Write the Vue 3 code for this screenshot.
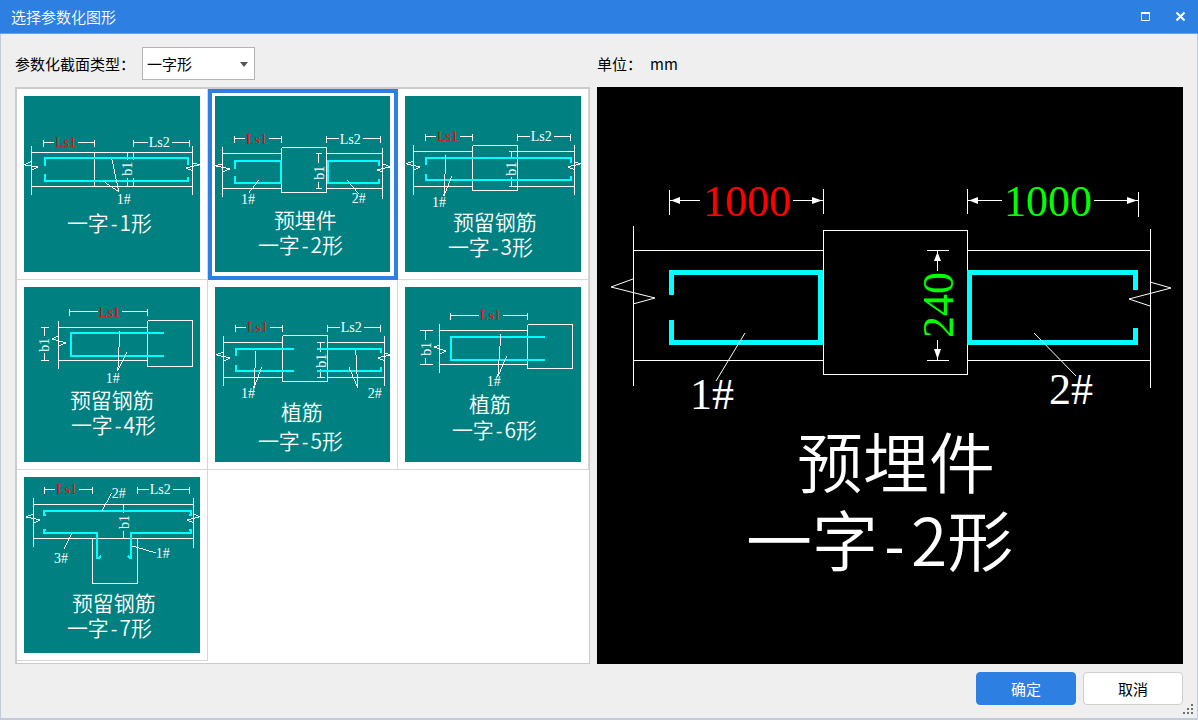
<script setup>
import { ref } from 'vue'

const sectionType = ref('line')
const selected = ref(2)

// Each dimension: start, end, baseline line y, tick range, text x, text baseline
const figures = [
  {
    id: 1,
    dims: [
      { a: 20, b: 71, y: 47, t: 'Ls1', x: 31, base: 51 },
      { a: 110, b: 166, y: 47, t: 'Ls2', x: 125, base: 51 }
    ],
    lines: 'M8 50V99M169 50V99M8 57H169M8 91H169M71 57V91M110 57V64M110 82V91M104 57V64M104 82V91M101 57H107M101 91H107',
    breaks: 'M8 65L0 69L14 71L8 74M169 67L176 69L162 72L169 75M88 63L95 96L79 85',
    bars: 'M21 70V62H164V69M21 78V85H164V81',
    b1: [108, 80],
    marks: [{ t: '1#', x: 93, y: 108 }],
    title: null,
    name: [43, 135]
  },
  {
    id: 2,
    dims: [
      { a: 20, b: 67, y: 43, t: 'Ls1', x: 31, base: 48 },
      { a: 112, b: 166, y: 43, t: 'Ls2', x: 125, base: 48 }
    ],
    lines: 'M8 51V101M168 52V103M8 58H67M8 93H67M112 58H168M112 93H168M67 52H112V97H67ZM104 58V67M104 86V93M101 58H107M101 93H107',
    breaks: 'M8 68L0 70L15 73L8 76M168 68L176 71L162 74L168 76M44 84L34 97M132 84L144 98',
    bars: 'M20 73V65H66V87H20V80M164 70V65H113V87H164V83',
    b1: [109, 84],
    marks: [{ t: '1#', x: 26, y: 108 }, { t: '2#', x: 137, y: 107 }],
    title: { t: '预埋件', x: 59, y: 132 },
    name: [43, 157]
  },
  {
    id: 3,
    dims: [
      { a: 21, b: 68, y: 41, t: 'Ls1', x: 32, base: 45 },
      { a: 113, b: 166, y: 41, t: 'Ls2', x: 126, base: 45 }
    ],
    lines: 'M9 49V99M170 49V99M9 56H68M9 91H68M113 56H170M113 91H170M68 50H113V95H68ZM107 56V63M107 81V91M104 56H113M104 91H113',
    breaks: 'M9 65L1 68L15 71L9 74M170 66L176 68L163 71L170 74M41 59L39 100L47 80',
    bars: 'M21 69V62H166V67M21 78V84H166V80',
    b1: [111, 80],
    marks: [{ t: '1#', x: 27, y: 111 }],
    title: { t: '预留钢筋', x: 48, y: 134 },
    name: [43, 159]
  },
  {
    id: 4,
    dims: [{ a: 46, b: 124, y: 25, t: 'Ls1', x: 75, base: 30 }],
    lines: 'M35 34V82M35 41H124M35 74H124M124 34H169V80H124ZM21 41V49M21 66V74M17 41H25M17 74H25',
    breaks: 'M35 49L28 52L42 56L35 59M96 44L94 84L103 65',
    bars: 'M140 46H47V69H140',
    b1: [25, 65],
    marks: [{ t: '1#', x: 82, y: 96 }],
    title: { t: '预留钢筋', x: 46, y: 121 },
    name: [47, 146]
  },
  {
    id: 5,
    dims: [
      { a: 21, b: 68, y: 41, t: 'Ls1', x: 32, base: 45 },
      { a: 113, b: 166, y: 41, t: 'Ls2', x: 126, base: 45 }
    ],
    lines: 'M9 49V99M170 49V99M9 56H68M9 91H68M113 56H170M113 91H170M68 49H113V95H68ZM106 56V65M106 82V91M102 56H110M102 91H110',
    breaks: 'M9 65L1 68L15 71L9 74M170 66L176 68L163 71L170 74M41 64L39 101L47 80M141 63L143 101L134 80',
    bars: 'M79 62H21V69M21 78V84H79M102 62H166V66M102 84H166V80',
    b1: [111, 81],
    marks: [{ t: '1#', x: 26, y: 111 }, { t: '2#', x: 153, y: 111 }],
    title: { t: '植筋', x: 66, y: 133 },
    name: [43, 162]
  },
  {
    id: 6,
    dims: [{ a: 46, b: 123, y: 29, t: 'Ls1', x: 75, base: 33 }],
    lines: 'M35 37V86M35 44H123M35 78H123M123 38H168V82H123ZM21 44V53M21 71V78M15 44H28M15 78H28',
    breaks: 'M35 58L29 60L41 64L35 67M96 47L93 90L102 69',
    bars: 'M140 50H46V73H140',
    b1: [26, 69],
    marks: [{ t: '1#', x: 82, y: 99 }],
    title: { t: '植筋', x: 64, y: 125 },
    name: [47, 151]
  },
  {
    id: 7,
    dims: [
      { a: 21, b: 69, y: 13, t: 'Ls1', x: 32, base: 17 },
      { a: 114, b: 166, y: 13, t: 'Ls2', x: 126, base: 17 }
    ],
    lines: 'M10 21V70M170 21V71M10 28H170M10 62H170M69 62V107H114V62M100 28V36M100 54V62',
    breaks: 'M10 37L2 40L16 43L10 46M170 37L176 40L163 43L170 46M78 34L88 16M48 56L40 72M108 69L132 76',
    bars: 'M22 38H20V34H167V38H165M22 53H20V56H73V81H75L77 79M165 53H167V56H107V81H106L104 79',
    b1: [105, 52],
    marks: [{ t: '2#', x: 88, y: 21 }, { t: '3#', x: 30, y: 86 }, { t: '1#', x: 132, y: 81 }],
    title: { t: '预留钢筋', x: 48, y: 134 },
    name: [43, 159]
  }
]

function dimPath(d) {
  return `M${d.a} ${d.y - 3}V${d.y + 4}M${d.b} ${d.y - 3}V${d.y + 4}M${d.a} ${d.y}H${d.x - 1}M${d.x + 23} ${d.y}H${d.b}`
}
</script>

<template>
  <main class="dialog">
    <header class="titlebar">
      <h1>选择参数化图形</h1>
      <button class="win-btn" type="button" aria-label="最大化">
        <svg width="11" height="11" viewBox="0 0 11 11"><path d="M1.5 2.500H9.500V9.500H1.500Z" fill="none" stroke="#fff" /><path d="M1 2H10" stroke="#fff" stroke-width="2" /></svg>
      </button>
      <button class="win-btn" type="button" aria-label="关闭">
        <svg width="11" height="11" viewBox="0 0 11 11"><path d="M1.500 1.500L9.500 9.500M9.500 1.500L1.500 9.500" stroke="#fff" stroke-width="2" /></svg>
      </button>
    </header>

    <div class="content">
      <div class="field">
        <label for="section-type">参数化截面类型：</label>
        <span class="select-box">
          <select id="section-type" v-model="sectionType">
            <option value="line">一字形</option>
          </select>
          <svg class="caret" width="8" height="5" viewBox="0 0 8 5"><path d="M0 0H8L4 5Z" fill="#555" /></svg>
        </span>
      </div>
      <div class="field unit"><span>单位：</span><span>mm</span></div>

      <section class="gallery">
        <button
          v-for="f in figures"
          :key="f.id"
          type="button"
          class="cell"
          :class="{ selected: selected === f.id }"
          :aria-pressed="selected === f.id"
          @click="selected = f.id"
        >
          <svg class="thumb" viewBox="0 0 176 176">
            <g class="white">
              <path v-for="d in f.dims" :key="d.t" :d="dimPath(d)" />
              <path :d="f.lines" />
            </g>
            <path class="bar" :d="f.bars" />
            <path class="white" :d="f.breaks" />
            <text v-for="d in f.dims" :key="d.t" :x="d.x" :y="d.base" :class="{ red: d.t === 'Ls1' }">{{ d.t }}</text>
            <text :transform="`translate(${f.b1[0]} ${f.b1[1]}) rotate(-90)`">b1</text>
            <text v-for="m in f.marks" :key="m.t" :x="m.x" :y="m.y">{{ m.t }}</text>
            <text v-if="f.title" class="cjk" :x="f.title.x" :y="f.title.y">{{ f.title.t }}</text>
            <text class="cjk" :x="f.name[0]" :y="f.name[1]">一字<tspan class="dash">-</tspan>{{ f.id }}形</text>
          </svg>
        </button>
      </section>

      <section class="preview">
        <svg viewBox="597 87 586 577">
          <g class="white">
            <path d="M669.5 190V215M823.5 189V214M669 200.500H700M793 200.500H823" />
            <path d="M967.5 189V214M1138.500 192V217M967 200.500H1002M1094 200.500H1138" />
            <path d="M633.5 226V386M1150.500 229V388" />
            <path d="M633 250.500H823M633 360.500H823M967 250.500H1150M967 360.500H1150" />
            <path d="M823.5 230.500H967.500V374.500H823.500Z" />
            <path d="M927 250.500H949M927 360.500H949M937.500 250V271M937.500 340V360" />
          </g>
          <g fill="#fff">
            <path d="M671 200.500L680 197V204ZM822 200.500L812 197V204ZM969 200.500L978 197V204ZM1137 200.500L1127 197V204Z" />
            <path d="M937.500 252L934 261H941ZM937.500 359L934 349H941Z" />
          </g>
          <g class="big-bar">
            <path d="M671.5 295V272.500H820.500V342.500H671.500V320" />
            <path d="M1135.500 290V272.500H969.500V342.500H1135.500V328" />
          </g>
          <path class="thin" d="M633 279L611 287L655 298L633 304M1150 282L1171 288L1129 299L1150 306M745 333L716 381M1034 333L1076 376" />
          <g class="value">
            <text class="red" x="703" y="216">1000</text>
            <text class="green" x="1004" y="216">1000</text>
            <text class="green" transform="translate(953 338) rotate(-90)">240</text>
            <text x="690" y="409">1#</text>
            <text x="1049" y="404">2#</text>
          </g>
          <g class="caption">
            <text x="797" y="488">预埋件</text>
            <text x="746" y="566">一字<tspan class="dash">-</tspan>2形</text>
          </g>
        </svg>
      </section>
    </div>

    <footer class="actions">
      <button type="button" class="btn primary">确定</button>
      <button type="button" class="btn">取消</button>
      <svg class="grip" width="11" height="11" viewBox="0 0 11 11">
        <path d="M8 0H10V2H8ZM8 4H10V6H8ZM4 4H6V6H4ZM8 8H10V10H8ZM4 8H6V10H4ZM0 8H2V10H0Z" fill="#6d7078" />
      </svg>
    </footer>
  </main>
</template>

<style>
body {
  margin: 0;
}
</style>

<style scoped>
.dialog {
  box-sizing: border-box;
  min-height: 100vh;
  display: flex;
  flex-direction: column;
  background: #efefef;
  color: #000;
  font: 15px/20px "Noto Sans CJK SC", sans-serif;
}

.dialog button,
.dialog select {
  font: inherit;
}

.titlebar {
  display: flex;
  align-items: center;
  height: 33px;
  padding: 0 6px 0 11px;
  background: #2d80e2;
  border-bottom: 1px solid #6ba3e8;
  color: #fff;
}

.titlebar h1 {
  flex: 1;
  margin: 0;
  font-size: 15px;
  line-height: 18px;
  font-weight: 350;
}

.win-btn {
  display: flex;
  align-items: center;
  justify-content: center;
  width: 24px;
  height: 24px;
  margin-left: 11px;
  padding: 0;
  border: 0;
  background: none;
}

.content {
  flex: 1;
  display: grid;
  grid-template-columns: 575fr 586fr;
  grid-template-rows: auto 1fr;
  column-gap: 7px;
  padding: 13px 14px 0;
  border: solid #c3cad8;
  border-width: 0 1px;
}

.field {
  display: flex;
  align-items: center;
  height: 33px;
  margin-bottom: 7px;
}

.field label {
  width: 127px;
  white-space: nowrap;
}

.unit {
  gap: 8px;
}

.select-box {
  position: relative;
  width: 113px;
  height: 33px;
}

.select-box select {
  appearance: none;
  width: 100%;
  height: 100%;
  padding: 0 4px;
  border: 1px solid #b4b4b4;
  border-radius: 0;
  background: #fff;
  color: #000;
}

.caret {
  position: absolute;
  right: 7px;
  top: 15px;
  pointer-events: none;
}

.gallery {
  display: grid;
  grid-template-columns: repeat(3, 1fr);
  align-content: start;
  background: #fff;
  border: 2px solid #cbcbcb;
  border-right-width: 1px;
  border-bottom-width: 1px;
}

.cell {
  position: relative;
  padding: 7px;
  border: solid #d6d6d6;
  border-width: 0 1px 1px 0;
  background: #fff;
}

.cell.selected {
  outline: 4px solid #2d80e2;
  outline-offset: -4px;
}

.thumb {
  display: block;
  width: 100%;
  background: #008080;
}

.white {
  fill: none;
  stroke: #fff;
  stroke-width: 1;
  shape-rendering: crispEdges;
}

.thin {
  fill: none;
  stroke: #fff;
  stroke-width: 1;
}

.bar {
  fill: none;
  stroke: #00ffff;
  stroke-width: 2;
  shape-rendering: crispEdges;
}

.thumb text {
  font: 14px "Liberation Serif", serif;
  fill: #fff;
}

.thumb text.cjk {
  font: 350 21px "Noto Sans CJK SC", sans-serif;
}

.thumb .dash {
  font: 18px "Liberation Mono", monospace;
}

.dialog .red {
  fill: #f00;
}

.dialog .green {
  fill: #0f0;
}

.preview {
  display: flex;
  background: #000;
}

.preview svg {
  width: 100%;
}

.big-bar {
  fill: none;
  stroke: #00ffff;
  stroke-width: 5;
  shape-rendering: crispEdges;
}

.value text {
  font: 44px "Liberation Serif", serif;
  fill: #fff;
}

.caption text {
  font: 350 66px "Noto Sans CJK SC", sans-serif;
  fill: #fff;
}

.caption .dash {
  font: 55px "Liberation Mono", monospace;
}

.actions {
  position: relative;
  display: flex;
  justify-content: flex-end;
  gap: 7px;
  padding: 8px 14px 13px;
  border: solid #c3cad8;
  border-width: 0 1px 2px;
}

.btn {
  width: 100px;
  height: 33px;
  padding: 0;
  border: 1px solid #cfcfcf;
  border-radius: 4px;
  background: #fff;
  color: #000;
}

.btn.primary {
  border-color: #2d80e2;
  background: #2d80e2;
  color: #fff;
}

.grip {
  position: absolute;
  right: 3px;
  bottom: 3px;
}
</style>
